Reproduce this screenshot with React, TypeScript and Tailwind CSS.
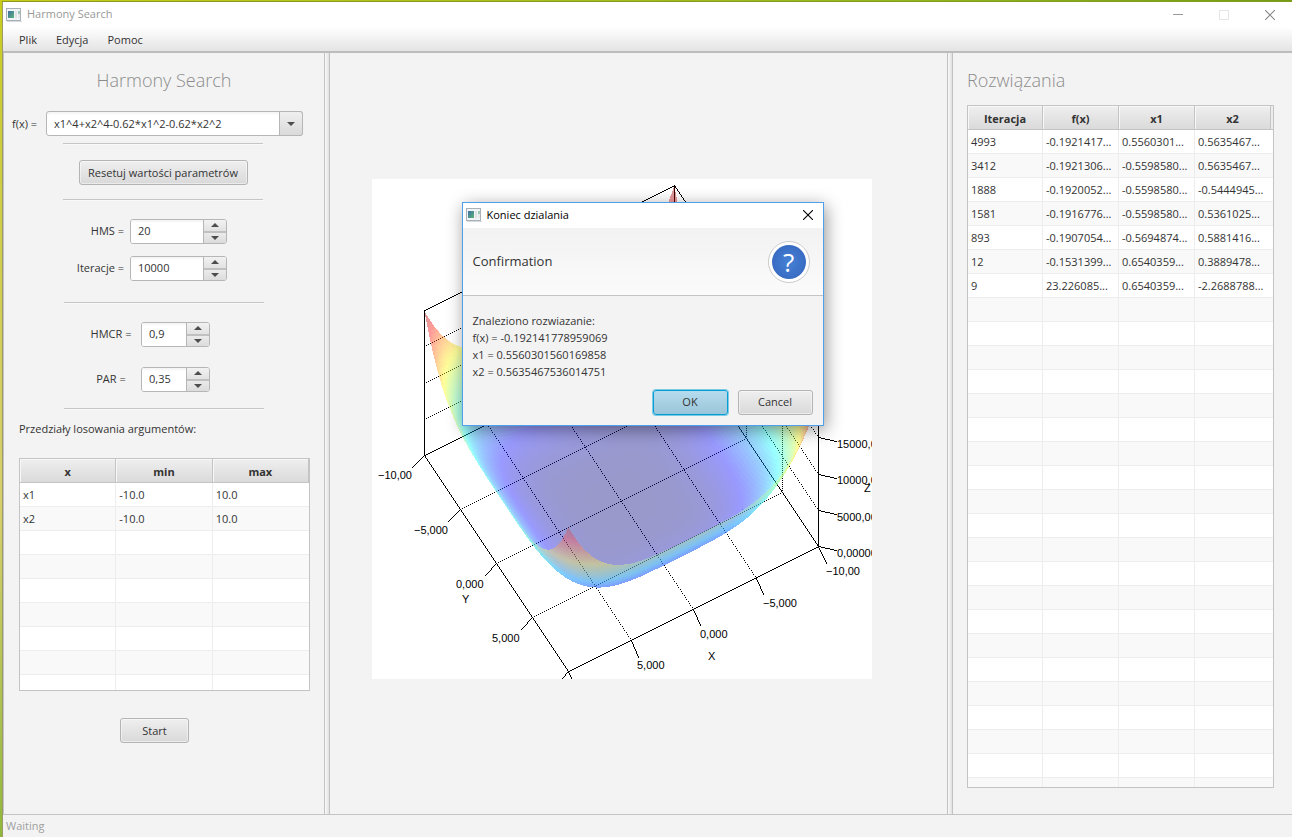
import React, { useId } from "react";

const button =
  "rounded-[3px] border border-[#b4b4b4] bg-gradient-to-b from-[#efefef] to-[#d9d9d9] pt-px text-[#333333] shadow-[inset_0_0_0_1px_rgba(255,255,255,0.45)]";

/* ---------- surface plot ---------- */

const PLOT = 500;
const STEPS = 100;

function project(x: number, y: number, z: number): [number, number] {
  return [196.4 - 12.5 * (x - 10) + 7.2 * (y - 10), 492.4 + 6.25 * (x - 10) + 10.8 * (y - 10) - z * 0.00727];
}

function objective(x: number, y: number) {
  return x ** 4 + y ** 4 - 0.62 * x ** 2 - 0.62 * y ** 2;
}

function channel(v: number, center: number, floor: number) {
  const d = Math.abs(v - center);
  const level = Math.min(1, Math.max(0, (0.375 - d) / 0.25));
  return Math.round(floor + (255 - floor) * level);
}

function rainbow(v: number, floor: number) {
  return `rgb(${channel(v, 0.75, floor)},${channel(v, 0.5, floor)},${channel(v, 0.25, floor)})`;
}

// Sample positions run from -10 to 10 and are denser near both ends, where the surface is steep.
function sample(i: number) {
  const t = (2 * i) / STEPS - 1;
  return 4 * t + 6 * Math.sin((t * Math.PI) / 2);
}

function buildSurface() {
  const faces: { points: string; fill: string }[] = [];
  for (let i = 0; i < STEPS; i++) {
    for (let j = 0; j < STEPS; j++) {
      const x0 = sample(i);
      const x1 = sample(i + 1);
      const y0 = sample(j);
      const y1 = sample(j + 1);
      const corners = [
        [x0, y0],
        [x1, y0],
        [x1, y1],
        [x0, y1],
      ].map(([a, b]) => project(a, b, objective(a, b)));
      // The outer side of the bowl is drawn in paler tones than the inner side.
      const [a, b, c] = corners;
      const outer = (b[0] - a[0]) * (c[1] - a[1]) - (b[1] - a[1]) * (c[0] - a[0]) > 0;
      const points = corners.map((p) => p.map((n) => n.toFixed(2)).join(",")).join(" ");
      faces.push({ points, fill: rainbow(objective((x0 + x1) / 2, (y0 + y1) / 2) / 19880, outer ? 80 : 0) });
    }
  }
  return faces;
}

const faces = buildSurface();

type Vec = [number, number, number];

// Plots a one-pixel line; a step of 2 leaves every other pixel blank.
function plotLine(x1: number, y1: number, x2: number, y2: number, step: number) {
  const n = Math.max(Math.abs(x2 - x1), Math.abs(y2 - y1));
  let d = "";
  for (let i = 0; i <= n; i += step) {
    const x = Math.round(x1 + ((x2 - x1) * i) / n);
    const y = Math.round(y1 + ((y2 - y1) * i) / n);
    d += `M${x} ${y}h1v1h-1z`;
  }
  return d;
}

function segment(a: Vec, b: Vec, step = 1) {
  const [x1, y1] = project(...a);
  const [x2, y2] = project(...b);
  return plotLine(Math.round(x1), Math.round(y1), Math.round(x2), Math.round(y2), step);
}

const TOP = 20000;

const edges = [
  segment([-10, -10, 0], [10, -10, 0]),
  segment([10, -10, 0], [10, 10, 0]),
  segment([10, 10, 0], [-10, 10, 0]),
  segment([-10, 10, 0], [-10, -10, 0]),
  segment([-10, -10, TOP], [10, -10, TOP]),
  segment([-10, -10, TOP], [-10, 10, TOP]),
  segment([10, -10, 0], [10, -10, TOP]),
  segment([-10, 10, 0], [-10, 10, TOP]),
  segment([-10, -10, 0], [-10, -10, TOP]),
].join("");

const grid = [
  ...[-5, 0, 5].flatMap((t) => [
    segment([t, -10, 0], [t, 10, 0], 2),
    segment([-10, t, 0], [10, t, 0], 2),
    segment([t, -10, 0], [t, -10, TOP], 2),
    segment([-10, t, 0], [-10, t, TOP], 2),
  ]),
  ...[5000, 10000, 15000].flatMap((z) => [
    segment([10, -10, z], [-10, -10, z], 2),
    segment([-10, 10, z], [-10, -10, z], 2),
  ]),
].join("");

const ticks = [
  [52, 276, 40, 288],
  [88, 330, 76, 342],
  [124, 384, 113, 396],
  [160, 438, 149, 450],
  [196, 492, 190, 499],
  [196, 492, 199, 499],
  [446, 367, 454, 384],
  [384, 399, 391, 415],
  [321, 430, 328, 446],
  [259, 461, 266, 478],
  [446, 367, 464, 371],
  [446, 331, 464, 335],
  [446, 295, 464, 299],
  [446, 258, 464, 262],
]
  .map(([x1, y1, x2, y2]) => plotLine(x1, y1, x2, y2, 1))
  .join("");

const tickLabels: [number, number, string][] = [
  [6, 300, "−10,00"],
  [42, 355, "−5,000"],
  [84, 409, "0,000"],
  [120, 463, "5,000"],
  [454, 396, "−10,00"],
  [391, 428, "−5,000"],
  [328, 459, "0,000"],
  [265, 490, "5,000"],
  [465, 378, "0,00000"],
  [465, 342, "5000,00"],
  [465, 305, "10000,0"],
  [465, 269, "15000,0"],
  [90, 424, "Y"],
  [336, 481, "X"],
  [492, 313, "Z"],
];

function SurfacePlot() {
  return (
    <svg width={PLOT} height={PLOT} viewBox="0 0 500 500" className="block bg-white" role="img" aria-label="f(x)">
      <g fill="#000" shapeRendering="crispEdges">
        <path d={grid} />
        <path d={edges} />
        <path d={ticks} />
      </g>
      <g shapeRendering="crispEdges" fillOpacity={0.4}>
        {faces.map((f, i) => (
          <polygon key={i} points={f.points} fill={f.fill} />
        ))}
      </g>
      <g className="font-['Liberation_Sans',sans-serif] text-[11px]" fill="#000">
        {tickLabels.map(([x, y, t], i) => (
          <text key={i} x={x} y={y}>
            {t}
          </text>
        ))}
      </g>
    </svg>
  );
}

/* ---------- small parts ---------- */

function AppIcon() {
  const id = useId();
  return (
    <svg width="16" height="14" viewBox="0 0 16 14" aria-hidden="true">
      <defs>
        <linearGradient id={id} x1="0" y1="0" x2="1" y2="1">
          <stop offset="0" stopColor="#3f6fa3" />
          <stop offset="1" stopColor="#5cb478" />
        </linearGradient>
      </defs>
      <rect x="0.5" y="0.5" width="14" height="12" fill="#f1f4f6" stroke="#a9b0b8" />
      <rect x="2" y="3" width="6" height="7" fill={`url(#${id})`} />
      <rect x="9" y="3" width="2" height="7" fill="#dfe3e6" />
      <rect x="12" y="3" width="2" height="3" fill="#9cc9b4" />
      <rect x="12" y="6" width="2" height="4" fill="#e6e9ec" />
      <path d="M1 13.5h15" stroke="#d5d8dc" />
    </svg>
  );
}

function Arrow({ up = false }: { up?: boolean }) {
  return (
    <svg width="8" height="4" viewBox="0 0 8 4" fill="#4d4d4d" aria-hidden="true">
      <path d={up ? "M0 4L4 0L8 4Z" : "M0 0L4 4L8 0Z"} />
    </svg>
  );
}

function Separator() {
  return <hr className="h-0.5 w-[200px] border-t border-b border-t-[#c6c6c6] border-b-[#fafafa]" />;
}

function Spinner({
  id,
  label,
  value,
  labelClass,
  inputClass,
}: {
  id: string;
  label: string;
  value: string;
  labelClass: string;
  inputClass: string;
}) {
  return (
    <div className="flex items-center">
      <label htmlFor={id} className={labelClass}>
        {label}
      </label>
      <div className="flex h-[25px] overflow-hidden rounded-[3px] border border-[#b6b6b6] bg-white">
        <input
          id={id}
          defaultValue={value}
          className={`bg-gradient-to-b from-[#f3f3f3] to-white to-15% px-[7px] outline-none ${inputClass}`}
        />
        <div className="flex w-[23px] flex-col divide-y-2 divide-[#c0c0c0] border-l border-[#b6b6b6]">
          <button
            aria-label={`${label} +`}
            className="flex flex-1 items-center justify-center bg-gradient-to-b from-[#f2f2f2] to-[#e2e2e2]"
          >
            <Arrow up />
          </button>
          <button
            aria-label={`${label} −`}
            className="flex flex-1 items-center justify-center bg-gradient-to-b from-[#ebebeb] to-[#dcdcdc]"
          >
            <Arrow />
          </button>
        </div>
      </div>
    </div>
  );
}

function DataTable({
  columns,
  widths,
  rows,
  total,
  filler = false,
}: {
  columns: string[];
  widths: string[];
  rows: string[][];
  total: number;
  filler?: boolean;
}) {
  const all = Array.from({ length: total }, (_, i) => rows[i] ?? columns.map(() => ""));
  return (
    <table className="w-full table-fixed border-separate border-spacing-0">
      <colgroup>
        {widths.map((w, i) => (
          <col key={i} className={w} />
        ))}
        {filler && <col />}
      </colgroup>
      <thead>
        <tr className="h-6">
          {columns.map((c) => (
            <th
              key={c}
              className="border-r border-b border-[#c4c4c4] bg-gradient-to-b from-[#efefef] to-[#dadada] px-0 pt-[3px] pb-0 font-bold shadow-[inset_1px_1px_0_#f8f8f8]"
            >
              {c}
            </th>
          ))}
          {filler && <th className="border-b border-[#c4c4c4] bg-[#ececec] p-0" aria-hidden="true" />}
        </tr>
      </thead>
      <tbody>
        {all.map((r, i) => (
          <tr key={i} className="h-6 odd:bg-white even:bg-[#f9f9f9]">
            {r.map((cell, j) => (
              <td
                key={j}
                colSpan={filler && j === r.length - 1 ? 2 : 1}
                className="overflow-hidden border-r border-b border-[#ededed] pt-0.5 pr-0 pb-0 pl-[3px] whitespace-nowrap last:border-r-0"
              >
                {cell}
              </td>
            ))}
          </tr>
        ))}
      </tbody>
    </table>
  );
}

function Divider() {
  return (
    <div className="w-1.5 shrink-0 border-x border-[#c2c2c2] bg-gradient-to-r from-[#fafafa] to-[#e0e0e0]" />
  );
}

function ResultDialog() {
  return (
    <div
      role="dialog"
      aria-label="Koniec dzialania"
      className="absolute top-[23px] left-[90px] flex h-56 w-[362px] flex-col border border-[#4f9fea] bg-[#f3f3f3] shadow-[2px_4px_16px_rgba(0,0,0,0.42)]"
    >
      <div className="flex h-[25px] items-center bg-white pr-2.5 pl-[3px] text-black">
        <AppIcon />
        <span className="ml-[5px] flex-1">Koniec dzialania</span>
        <button aria-label="Close">
          <svg width="10" height="10" viewBox="0 0 10 10" stroke="#000" strokeWidth="1.1">
            <path d="M0 0L10 10M10 0L0 10" />
          </svg>
        </button>
      </div>
      <div className="flex h-[68px] items-center justify-between border-b border-[#c4c4c4] bg-gradient-to-b from-[#f2f2f2] to-[#fbfbfb] pt-0.5 pr-[13px] pl-2.5">
        <span className="text-[13px]">Confirmation</span>
        <span className="flex size-[42px] items-center justify-center rounded-full border border-[#cccccc] bg-white">
          <span className="flex size-[34px] items-center justify-center rounded-full bg-radial from-[#4682d6] to-[#3363ba] text-[26px] leading-none text-white">
            ?
          </span>
        </span>
      </div>
      <div className="flex-1 px-2.5 pt-4 leading-[17px]">
        <p>Znaleziono rozwiazanie:</p>
        <p>f(x) = -0.192141778959069</p>
        <p>x1 = 0.5560301560169858</p>
        <p>x2 = 0.5635467536014751</p>
      </div>
      <div className="flex justify-end gap-2.5 pr-2.5 pb-2.5">
        <button className="h-[25px] w-[75px] rounded-[3px] border border-[#039ed3] bg-gradient-to-b from-[#b5dcee] to-[#9cc5d9] pt-px shadow-[0_0_0_1px_#7fcbe6]">
          OK
        </button>
        <button className={`h-[25px] w-[75px] ${button}`}>Cancel</button>
      </div>
    </div>
  );
}

/* ---------- data ---------- */

const solutions = [
  ["4993", "-0.1921417...", "0.5560301...", "0.5635467..."],
  ["3412", "-0.1921306...", "-0.5598580...", "0.5635467..."],
  ["1888", "-0.1920052...", "-0.5598580...", "-0.5444945..."],
  ["1581", "-0.1916776...", "-0.5598580...", "0.5361025..."],
  ["893", "-0.1907054...", "-0.5694874...", "0.5881416..."],
  ["12", "-0.1531399...", "0.6540359...", "0.3889478..."],
  ["9", "23.226085...", "0.6540359...", "-2.2688788..."],
];

const ranges = [
  ["x1", "-10.0", "10.0"],
  ["x2", "-10.0", "10.0"],
];

export default function App() {
  return (
    <div className="flex h-screen flex-col bg-gradient-to-b from-[#c8cc18] via-[#d8cf6c] via-60% to-[#8fb83a] pl-0.5 font-['Open_Sans','Noto_Sans',sans-serif] text-[11px] text-[#333333]">
      <div className="h-0.5 shrink-0 border-b border-[#8a9a20] bg-gradient-to-r from-[#c8cc18] via-[#8fb81c] via-70% to-[#6f9f10]" />
      <div className="flex min-h-0 flex-1 flex-col border-l border-[#9a9a6a] bg-[#f3f3f3]">
        <header className="flex h-[25px] shrink-0 items-center bg-white pr-[17px] pl-[3px] text-[#999999]">
          <AppIcon />
          <span className="ml-[5px] flex-1">Harmony Search</span>
          <div className="flex items-center gap-9">
            <button aria-label="Minimize" className="flex size-2.5 items-center">
              <span className="h-px w-full bg-[#999999]" />
            </button>
            <button aria-label="Maximize" className="size-2.5 border border-[#e6e6e6]" />
            <button aria-label="Close">
              <svg width="10" height="10" viewBox="0 0 10 10" stroke="#888" strokeWidth="1.1">
                <path d="M0 0L10 10M10 0L0 10" />
              </svg>
            </button>
          </div>
        </header>

        <nav className="flex h-[26px] shrink-0 items-center gap-[19px] border-b-2 border-[#bcbcbc] bg-gradient-to-b from-white to-[#e4e4e4] pt-0.5 pl-4">
          <button>Plik</button>
          <button>Edycja</button>
          <button>Pomoc</button>
        </nav>

        <main className="flex min-h-0 flex-1 border-b border-l border-[#c4c4c4]">
          <aside className="flex w-80 shrink-0 flex-col items-center">
            <h1 className="mt-[15px] text-[18px] leading-6 font-light text-[#8c8c8c]">Harmony Search</h1>

            <div className="mt-[19px] flex w-full items-center pr-[21px] pl-2">
              <label htmlFor="fn" className="w-[34px] pt-px whitespace-nowrap">
                f(x) =
              </label>
              <div className="relative flex-1">
                <select
                  id="fn"
                  className="block h-[25px] w-full appearance-none rounded-[3px] border border-[#b6b6b6] bg-white bg-gradient-to-b from-[#f3f3f3] to-white to-15% px-[7px] pt-px outline-none"
                >
                  <option>x1^4+x2^4-0.62*x1^2-0.62*x2^2</option>
                </select>
                <span className="pointer-events-none absolute inset-y-0 right-0 flex w-6 items-center justify-center rounded-r-[3px] border border-[#b6b6b6] bg-gradient-to-b from-[#efefef] to-[#dadada]">
                  <Arrow />
                </span>
              </div>
            </div>

            <div className="mt-[7px] flex flex-col items-center pr-0.5">
              <Separator />
              <button className={`mt-[15px] mb-3.5 h-[25px] w-[169px] ${button}`}>Resetuj wartości parametrów</button>
              <Separator />
            </div>

            <div className="mt-[18px] flex w-full flex-col gap-3 pl-[66px]">
              <Spinner id="hms" label="HMS =" value="20" labelClass="w-[60px] pr-1.5 text-right" inputClass="w-[72px]" />
              <Spinner
                id="iter"
                label="Iteracje ="
                value="10000"
                labelClass="w-[60px] pr-1.5 text-right"
                inputClass="w-[72px]"
              />
            </div>

            <div className="mt-[21px] flex flex-col items-center">
              <Separator />
            </div>

            <div className="mt-[18px] flex w-full flex-col gap-5 pl-[77px]">
              <Spinner id="hmcr" label="HMCR =" value="0,9" labelClass="w-[60px] text-center" inputClass="w-11" />
              <Spinner id="par" label="PAR =" value="0,35" labelClass="w-[60px] text-center" inputClass="w-11" />
            </div>

            <div className="mt-4">
              <Separator />
            </div>

            <p className="mt-[11px] w-full pl-[15px] leading-4">Przedziały losowania argumentów:</p>

            <div className="mt-[21px] w-full pr-3.5 pl-[15px]">
              <div className="h-[233px] overflow-hidden border border-[#c4c4c4] bg-white">
                <DataTable columns={["x", "min", "max"]} widths={["w-1/3", "w-1/3", "w-1/3"]} rows={ranges} total={9} />
              </div>
            </div>

            <button className={`mt-[27px] mr-[19px] h-[25px] w-[69px] ${button}`}>Start</button>
          </aside>

          <Divider />

          <section className="flex min-w-0 flex-1 items-center justify-center pr-[34px] pb-2.5">
            <div className="relative shrink-0">
              <SurfacePlot />
              <ResultDialog />
            </div>
          </section>

          <Divider />

          <aside className="flex w-[339px] shrink-0 flex-col pr-[18px] pb-[26px] pl-3.5">
            <h2 className="mt-[15px] mb-[13px] text-[18px] leading-6 font-light text-[#8c8c8c]">Rozwiązania</h2>
            <div className="min-h-0 flex-1 overflow-hidden border border-[#c4c4c4] bg-white">
              <DataTable
                columns={["Iteracja", "f(x)", "x1", "x2"]}
                widths={["w-[75px]", "w-[76px]", "w-[76px]", "w-[76px]"]}
                rows={solutions}
                total={40}
                filler
              />
            </div>
          </aside>
        </main>

        <footer className="flex h-[22px] shrink-0 items-center pl-[3px] text-[#a0a0a0]">Waiting</footer>
      </div>
    </div>
  );
}
